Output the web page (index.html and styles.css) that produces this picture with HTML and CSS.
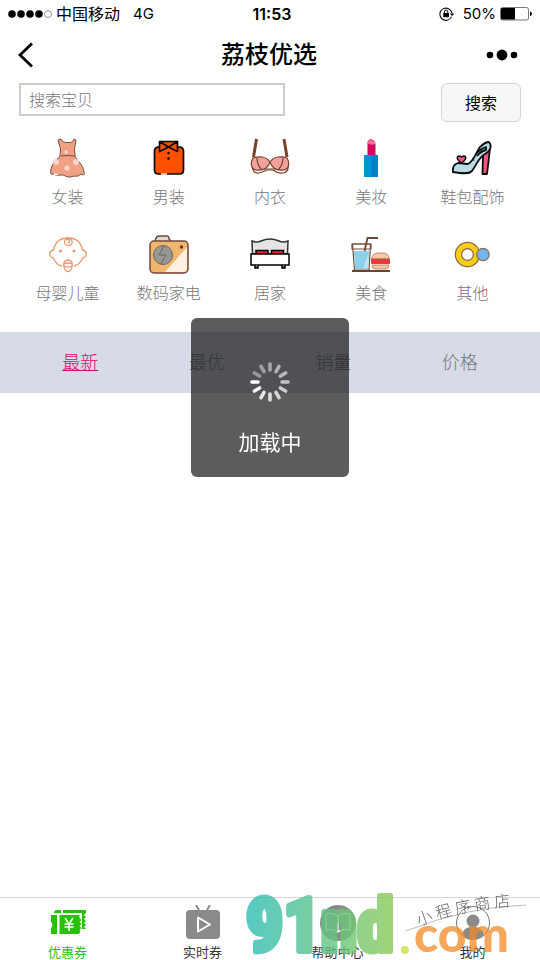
FILE: index.html
```html
<!DOCTYPE html>
<html lang="zh-CN">
<head>
  <meta charset="UTF-8">
  <meta name="viewport" content="width=device-width, initial-scale=1.0">
  <title>荔枝优选</title>
  <link rel="stylesheet" href="styles.css">
</head>
<body>
  <!-- Status bar -->
  <div class="status-bar">
    <div class="status-left">
      <svg class="signal" width="44" height="10" viewBox="0 0 44 10">
        <circle cx="4" cy="5" r="3.8"/><circle cx="13" cy="5" r="3.8"/><circle cx="22" cy="5" r="3.8"/><circle cx="31" cy="5" r="3.8"/>
        <circle cx="40" cy="5" r="3.5" fill="none" stroke="#777" stroke-width=".8"/>
      </svg>
      <span>中国移动</span>
      <span class="network">4G</span>
    </div>
    <span class="clock">11:53</span>
    <div class="status-right">
      <svg width="16" height="14" viewBox="0 0 16 14">
        <path d="M12.6 9.6A6.1 6.1 0 1 1 13 6.2" fill="none" stroke="#111" stroke-width="1.1"/>
        <path d="M10.8 6.4h4.6L13.1 9z"/>
        <rect x="4.2" y="6" width="5.8" height="4.3" rx=".5"/>
        <path d="M5.4 6V4.8a1.7 1.7 0 0 1 3.4 0V6" fill="none" stroke="#000" stroke-width="1"/>
      </svg>
      <span class="percent">50%</span>
      <svg width="32" height="14" viewBox="0 0 32 14">
        <rect x=".5" y=".5" width="28" height="12.5" rx="2" fill="#fff" stroke="#777"/>
        <path d="M1 2a1 1 0 0 1 1-1h13v11.5H2a1 1 0 0 1-1-1z"/>
        <path d="M30 4.5q2 .5 2 2.3T30 9z"/>
      </svg>
    </div>
  </div>

  <!-- Title bar -->
  <header class="nav-bar">
    <button class="nav-button" type="button" aria-label="返回">
      <svg width="16" height="26" viewBox="0 0 16 26"><path d="M14 1.5 2 13l12 11.5" fill="none" stroke="#000" stroke-width="2.8"/></svg>
    </button>
    <h1>荔枝优选</h1>
    <button class="nav-button" type="button" aria-label="更多">
      <svg width="32" height="12" viewBox="0 0 32 12"><circle cx="4" cy="6" r="3.3"/><circle cx="16" cy="6" r="5.4"/><circle cx="28" cy="6" r="3.3"/></svg>
    </button>
  </header>

  <form class="search">
    <input class="search-input" type="text" placeholder="搜索宝贝" aria-label="搜索宝贝">
    <button class="search-button" type="button">搜索</button>
  </form>

  <!-- Categories -->
  <nav class="categories">
    <a class="category" href="#">
      <svg viewBox="0 0 40 40">
        <path d="M10 2l3-1q2 4 7 3.500 5 .5 6-3.500l2 1-1.500 9 .5 7c2 5 8 8 9 16 1 3-1 4-3 2-4 4-7 1-10 3-5 1-7-3-10-2-4 1-7-1-10-1-2-8 5-13 9-18l.5-7z" fill="#f0a184" stroke="#77503b" stroke-width="1"/>
        <path d="M13 18q7-1 14 0" fill="none" stroke="#77503b"/>
        <circle cx="18" cy="14" r="1.700" fill="#fbd4ca"/><circle cx="8" cy="24" r="3" fill="#fbd4ca"/><circle cx="19" cy="30" r="2.600" fill="#fbd4ca"/><circle cx="28" cy="24" r="3" fill="#fbd4ca"/><path d="M5 37q2-3 6 0" fill="#fff"/>
      </svg>
      <span>女装</span>
    </a>
    <a class="category" href="#">
      <svg viewBox="0 0 40 40">
        <path d="M5.500 13q0-3 3-4h23q3 1 3 4v19q0 4-4 4h-21q-4 0-4-4z" fill="#ff5000" stroke="#0a0a0a" stroke-width="1.700"/>
        <path d="M10.500 3.500h18v6h-18z" fill="#ff5000"/>
        <path d="M10.500 3.500l9 5.500 9-5.500v10l-9-4.500-9 4.500zM10.500 3.500h18" fill="#ff5000" stroke="#0a0a0a" stroke-width="1.700" stroke-linejoin="round"/>
        <circle cx="19.500" cy="15" r="1.200"/><circle cx="19.500" cy="20.500" r="1.200"/>
        <path d="M12 36h6" stroke="#ffb28e" stroke-width="2"/>
      </svg>
      <span>男装</span>
    </a>
    <a class="category" href="#">
      <svg viewBox="0 0 40 40" fill="none" stroke="#77442a" stroke-width="1.200">
        <path d="M6.500 1 3.500 19M34 1l3 18" stroke-width="3"/>
        <path d="M2 28q1 8 7 7 4-1 8-3h6q5 4 10 3 6-1 5-8"/>
        <path d="M20 24C16 18 8 18 3 20c-3 5-2 11 3 12 7 1 12-2 14-8zM20 24c4-6 12-6 17-4 3 5 2 11-3 12-7 1-12-2-14-8z" fill="#f3a0a0"/>
        <path d="M7 20q0 7 5 12M33 20q0 7-5 12M14 31h12"/>
      </svg>
      <span>内衣</span>
    </a>
    <a class="category" href="#">
      <svg viewBox="0 0 40 40">
        <path d="M16.500 5q0-3 3-4 4.500 1 5 5v12h-8z" fill="#d6065e"/><path d="M16.500 5q0-3 3-4 4.500 1 5 5-5 2-8-1z" fill="#ef7095"/>
        <path d="M13 17h14v22H13z" fill="#0094da"/><path d="M20 17h7v22h-7z" fill="#0083c2"/>
      </svg>
      <span>美妆</span>
    </a>
    <a class="category" href="#">
      <svg viewBox="0 0 40 40" stroke="#080b0d" stroke-width="1.800" stroke-linejoin="round">
        <path d="M31 16l7-6q-1 10-3 26h-4.500z" fill="#fb577e"/>
        <path d="M1 34q-1-7 5-9l10 1c6-3 8-12 12-17q5-5 9-5c4 5 0 10-4 12-6 3-8 10-13 17-3 3-8 3-19 1z" fill="#badbe2"/>
        <path d="M24 16q4-5 10-7v3q-5 1-9 6" fill="none"/>
        <circle cx="22" cy="22" r=".6" fill="#000" stroke="none"/>
        <path d="M9.500 25c-7-5-4-9 0-6 4-3 7 1 0 6z" fill="#fb577e" stroke-width="1.500"/>
      </svg>
      <span>鞋包配饰</span>
    </a>

    <a class="category" href="#">
      <svg viewBox="0 0 40 40" fill="none" stroke="#ed9a70" stroke-width="1.300">
        <path d="M14 32C9 31 7 28 5.500 24c-5-1-5-7 0-8C7 8 12 4 20 4s13 4 14.500 12c5 1 5 7 0 8-1.500 4-4 7-8.500 8"/>
        <path d="M19 4c6 0 7 7 2 7.500-5 0-6-6-2-6.500 3 0 3 4 1 4"/>
        <circle cx="12.500" cy="17" r=".9" fill="#ed9a70"/><circle cx="26" cy="17" r=".9" fill="#ed9a70"/>
        <path d="M16 32v-4q4-4 8 0v4M15 30q5-2 10 0M15 32q5 2 10 0"/>
        <path d="M16 31q0 6.500 4 6.500t4-6.500"/>
      </svg>
      <span>母婴儿童</span>
    </a>
    <a class="category" href="#">
      <svg viewBox="0 0 40 40">
        <path d="M6 7l1-3q1-2 3-2h8q2 0 2 3l2 2" fill="#dedbd4" stroke="#704a3d" stroke-width="1.500"/>
        <rect x="1" y="7" width="38" height="32" rx="4" fill="#f0b66c" stroke="#704a3d" stroke-width="1.500"/>
        <path d="M38 13v21q0 4-4 4H16z" fill="#fff0df"/>
        <circle cx="14" cy="21" r="9.500" fill="#999792" stroke="#6e6863"/>
        <path d="M15 12l-5 9h7l-5 9" fill="none" stroke="#67645f"/>
        <circle cx="32.500" cy="13" r="1.700" fill="#593a32"/>
      </svg>
      <span>数码家电</span>
    </a>
    <a class="category" href="#">
      <svg viewBox="0 0 40 40" stroke="#000" stroke-width="1.500">
        <path d="M2.500 20 2 7q5 2 9 0 9-4 18 0 4 2 9 0l-.5 13z" fill="#e4e4e4" stroke="#333"/>
        <path d="M6 20v-3.500h12V20M21.500 20v-3.500h12V20" fill="#f12330"/>
        <rect x="1" y="20" width="38" height="11" fill="#fff"/>
        <path d="M5 31v3h3v-3M32 31v3h3v-3" fill="#777"/>
      </svg>
      <span>居家</span>
    </a>
    <a class="category" href="#">
      <svg viewBox="0 0 40 40">
        <path d="M1.500 10h18l-1.500 26H3.500z" fill="#fff" stroke="#744e3c" stroke-width="1.200"/>
        <path d="M1 10h19v5H1z" fill="none" stroke="#744e3c" stroke-width="1.200"/>
        <path d="M3 17h15l-1 18H4z" fill="#8ed0e9"/><path d="M17.500 19l-1 15h-4z" fill="#bfe6f0"/>
        <path d="M13.500 17l3-13H27" fill="none" stroke="#704532" stroke-width="1.800"/>
        <path d="M21 25q0-6 6-6h5q6 0 6 6z" fill="#f4cba1" stroke="#ad694e" stroke-width=".7"/>
        <rect x="20" y="25" width="19" height="5" rx="1" fill="#e83b36"/><path d="M20 25h19" stroke="#94674c" stroke-dasharray="3 1"/>
        <path d="M21 31h17q0 4-3 4H24q-3 0-3-4z" fill="#f4cba1" stroke="#ad694e" stroke-width=".7"/>
        <path d="M1 37h38" stroke="#70412c" stroke-width="2"/>
      </svg>
      <span>美食</span>
    </a>
    <a class="category" href="#">
      <svg viewBox="0 0 40 40">
        <circle cx="15.500" cy="20.500" r="9" fill="none" stroke="#8b654d" stroke-width="7.500"/>
        <circle cx="15.500" cy="20.500" r="9" fill="none" stroke="#f6ce15" stroke-width="5"/>
        <circle cx="31" cy="20.500" r="6.200" fill="#70b5eb" stroke="#8b6957" stroke-width="1.200"/>
      </svg>
      <span>其他</span>
    </a>
  </nav>

  <!-- Sort order -->
  <nav class="sort-bar">
    <a class="sort-item active" href="#">最新</a>
    <a class="sort-item" href="#">最优</a>
    <a class="sort-item" href="#">销量</a>
    <a class="sort-item" href="#">价格</a>
  </nav>

  <main class="goods"></main>

  <!-- Bottom tabs -->
  <nav class="tab-bar">
    <a class="tab active" href="#">
      <svg viewBox="0 0 36 36">
        <path d="M4 8q0-3 3-3h4v3zM13 5h23v3l-2 2 2 2-2 2 2 2-2 2 2 2-2 2 2 2h-4V8H13z" fill="#27c00a"/>
        <path d="M1 10h6v19H1v-6q3-3 0-6zM9.500 10h20v3l2 2-2 2 2 2-2 2 2 2-2 2 1 2-2 2h-19z" fill="#27c00a"/>
        <path d="M15 13l4 6 4-6M14.500 19h9M14.500 22h9M19 19v7" fill="none" stroke="#fff" stroke-width="1.600"/>
      </svg>
      <span>优惠券</span>
    </a>
    <a class="tab" href="#">
      <svg viewBox="0 0 36 36">
        <path d="M11 0l3 5M25 0l-3 5" stroke="#8a8a8a" stroke-width="2"/>
        <rect x="1" y="5" width="34" height="29" rx="4" fill="#8a8a8a"/>
        <path d="M13 12.500v14l12-7z" fill="none" stroke="#fff" stroke-width="2" stroke-linejoin="round"/>
      </svg>
      <span>实时券</span>
    </a>
    <a class="tab" href="#">
      <svg viewBox="0 0 36 36">
        <circle cx="18" cy="18" r="18" fill="#8a8a8a"/>
        <path d="M18 11q-5-4-12-2v16q7-2 12 2 5-4 12-2V9q-7-2-12 2zv16" fill="none" stroke="#fff" stroke-width="1.300"/>
      </svg>
      <span>帮助中心</span>
    </a>
    <a class="tab" href="#">
      <svg viewBox="0 0 36 36">
        <circle cx="18" cy="18" r="16.500" fill="#fff" stroke="#777" stroke-width="1"/>
        <circle cx="18" cy="16" r="6.500" fill="#8a8a8a"/>
        <path d="M7 30q1-7 8-8h6q7 1 8 8-11 9-22 0z" fill="#8a8a8a"/>
      </svg>
      <span>我的</span>
    </a>
  </nav>

  <!-- Loading toast -->
  <div class="toast" role="status">
    <svg class="spinner" viewBox="-20 -20 40 40" stroke="#fff" stroke-width="3.600" stroke-linecap="round">
      <path d="M0-12v-6" opacity=".5"/>
      <path d="M0-12v-6" opacity=".55" transform="rotate(30)"/>
      <path d="M0-12v-6" opacity=".6" transform="rotate(60)"/>
      <path d="M0-12v-6" opacity=".65" transform="rotate(90)"/>
      <path d="M0-12v-6" opacity=".7" transform="rotate(120)"/>
      <path d="M0-12v-6" opacity=".75" transform="rotate(150)"/>
      <path d="M0-12v-6" opacity=".8" transform="rotate(180)"/>
      <path d="M0-12v-6" opacity=".86" transform="rotate(210)"/>
      <path d="M0-12v-6" opacity=".94" transform="rotate(240)"/>
      <path d="M0-12v-6" transform="rotate(270)"/>
      <path d="M0-12v-6" opacity=".4" transform="rotate(300)"/>
      <path d="M0-12v-6" opacity=".45" transform="rotate(330)"/>
    </svg>
    <span>加载中</span>
  </div>

  <!-- Site mark -->
  <svg class="site-mark" width="300" height="75" viewBox="0 0 300 75">
    <defs>
      <linearGradient id="mark" gradientUnits="userSpaceOnUse" x1="3" y1="0" x2="153" y2="0">
        <stop offset="0" stop-color="#2bbdb9"/>
        <stop offset="1" stop-color="#8aca58"/>
      </linearGradient>
      <path id="arc" d="M179 41Q223 23 290 20"/>
    </defs>
    <text class="mark-name" x="6" y="66" fill="url(#mark)" stroke="url(#mark)">91nd</text>
    <circle cx="165" cy="65" r="4" fill="#d6e667"/>
    <text class="mark-com" x="174" y="67">com</text>
    <path d="M166 46Q225 22 286 20" fill="none" stroke="#aaa" stroke-width=".8"/>
    <text class="mark-note"><textPath href="#arc">小 程 序 商 店</textPath></text>
  </svg>
</body>
</html>
```
FILE: styles.css
```css
* {
  margin: 0;
  padding: 0;
  box-sizing: border-box;
}
body {
  display: flex;
  flex-direction: column;
  min-height: 100vh;
  background: #fff;
  color: #000;
  font-family: Inter, "Noto Sans CJK SC", sans-serif;
  font-size: 16px;
  line-height: 24px;
}
a {
  color: inherit;
  text-decoration: none;
}
button {
  font: inherit;
  color: inherit;
}
svg {
  display: block;
  flex: none;
}

/* Status bar */
.status-bar {
  display: grid;
  grid-template-columns: 1fr auto 1fr;
  align-items: center;
  height: 27px;
  padding: 0 8px;
}
.status-left,
.status-right {
  display: flex;
  align-items: center;
}
.status-right {
  justify-content: flex-end;
}
.signal {
  margin-right: 4px;
}
.network {
  margin-left: 13px;
}
.clock {
  padding-left: 4px;
  font-weight: 600;
}
.percent {
  margin: 0 4px 0 8px;
}
.network,
.percent {
  font-size: 15px;
}

/* Title bar */
.nav-bar {
  display: flex;
  align-items: center;
  justify-content: space-between;
  height: 56px;
  padding: 0 20px 0 18px;
}
.nav-button {
  display: flex;
  width: 34px;
  border: 0;
  background: none;
}
.nav-bar h1 {
  font-size: 24px;
  line-height: 36px;
  font-weight: 500;
}

/* Search */
.search {
  display: flex;
  align-items: flex-start;
  justify-content: space-between;
  padding: 0 19px;
}
.search-input {
  width: 53%;
  height: 33px;
  padding: 0 8px;
  border: 2px solid #ccc;
  font: inherit;
  font-weight: 300;
}
.search-input::placeholder {
  color: #777;
}
.search-button {
  width: 80px;
  height: 39px;
  border: 1px solid #d4d4d4;
  border-radius: 6px;
  background: #f7f7f7;
}

/* Categories */
.categories {
  display: grid;
  grid-template-columns: repeat(5, 1fr);
  row-gap: 25px;
  padding: 16px 17px 27px;
}
.category {
  display: flex;
  flex-direction: column;
  align-items: center;
  gap: 7px;
  color: #777;
  font-weight: 300;
}
.category svg {
  width: 40px;
  height: 40px;
}

/* Sort order */
.sort-bar {
  display: grid;
  grid-template-columns: repeat(4, 1fr);
  padding: 0 17px;
  background: #d6dbe7;
  color: #777;
  font-size: 18px;
  font-weight: 300;
  line-height: 61px;
  text-align: center;
}
.sort-item.active {
  color: #d9096c;
  text-decoration: underline;
}

.goods {
  flex: 1;
}

/* Bottom tabs */
.tab-bar {
  display: grid;
  grid-template-columns: repeat(4, 1fr);
  height: 63px;
  padding-top: 7px;
  border-top: 1px solid #d8d8d8;
  font-size: 13px;
  line-height: 20px;
}
.tab {
  display: flex;
  flex-direction: column;
  align-items: center;
  gap: 1px;
  color: #333;
}
.tab svg {
  width: 36px;
  height: 36px;
}
.tab.active {
  color: #27c00a;
}

/* Loading toast */
.toast {
  position: fixed;
  top: 318px;
  left: 50%;
  transform: translateX(-50%);
  display: flex;
  flex-direction: column;
  align-items: center;
  gap: 25px;
  width: 158px;
  height: 159px;
  padding-top: 44px;
  border-radius: 6px;
  background: rgba(23, 23, 23, 0.7);
  color: #fff;
  font-size: 21px;
  line-height: 32px;
}
.spinner {
  width: 40px;
  height: 40px;
}

/* Site mark */
.site-mark {
  position: fixed;
  right: 0;
  bottom: 0;
  overflow: visible;
  pointer-events: none;
}
.mark-name {
  font-family: "Liberation Sans Narrow", "Roboto Condensed", Roboto, sans-serif;
  font-size: 74px;
  font-weight: 700;
  stroke-width: 6px;
  stroke-linejoin: round;
  opacity: 0.8;
}
.mark-com {
  font-family: Lato, sans-serif;
  font-size: 50px;
  font-weight: 900;
  fill: #f28a24;
  opacity: 0.75;
}
.mark-note {
  font-family: "Noto Sans CJK SC", sans-serif;
  font-size: 16px;
  font-weight: 300;
  fill: #666;
}
```
